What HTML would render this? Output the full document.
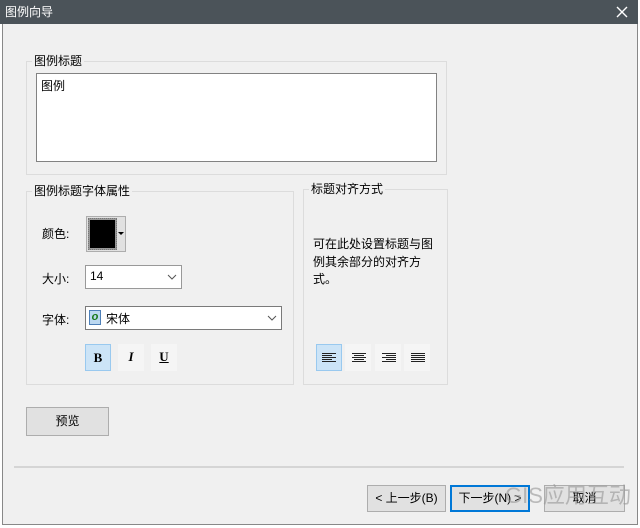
<!DOCTYPE html>
<html><head><meta charset="utf-8"><style>
*{box-sizing:border-box;margin:0;padding:0}
body{width:640px;height:528px;background:#fff;position:relative;overflow:hidden;font-family:"Liberation Sans","Noto Sans CJK SC",sans-serif;font-size:12px;color:#000}
.a{position:absolute}
.dlg{left:2px;top:0;width:636px;height:525px;background:#f0f0f0;border:1px solid #888;border-top:none}
.title{left:0;top:0;width:638px;height:24px;background:#4b5359;color:#fff;font-size:12px;line-height:24px;padding-left:5px}
.grp{border:1px solid #dcdcdc}
.lg{background:#f0f0f0;padding:0 2px;font-size:12px;line-height:14px;color:#000}
.btn{background:#e1e1e1;border:1px solid #adadad;text-align:center;line-height:26px;font-size:12px}
.tb{background:#f5f5f5;width:26px;height:27px}
.sel{background:#cce4f7;border:1px solid #99c9ef}
.combo{background:#fff;border:1px solid #7a7a7a}
</style></head><body>
<div class="a dlg"></div>
<div class="a title">图例向导</div>
<svg class="a" style="left:616px;top:6px" width="12" height="12"><path d="M1 1L11 11M11 1L1 11" stroke="#fff" stroke-width="1.4"/></svg>

<div class="a grp" style="left:26px;top:61px;width:421px;height:114px"></div>
<div class="a lg" style="left:32px;top:54px">图例标题</div>
<div class="a" style="left:36px;top:73px;width:401px;height:89px;background:#fff;border:1px solid #828282;padding:3px 4px">图例</div>

<div class="a grp" style="left:26px;top:191px;width:268px;height:194px"></div>
<div class="a lg" style="left:32px;top:184px">图例标题字体属性</div>
<div class="a" style="left:42px;top:225px">颜色:</div>
<div class="a" style="left:86px;top:216px;width:40px;height:36px;background:#e1e1e1;border:1px solid #adadad"></div>
<div class="a" style="left:88px;top:218px;width:29px;height:32px;border:1px dotted #777;background:#999"></div>
<div class="a" style="left:90px;top:220px;width:25px;height:28px;background:#000"></div>
<svg class="a" style="left:118px;top:232px" width="6" height="4"><path d="M0 0H6L3 3Z" fill="#000"/></svg>
<div class="a" style="left:42px;top:270px">大小:</div>
<div class="a combo" style="left:85px;top:265px;width:97px;height:24px;padding:3px 4px;border-color:#999">14</div>
<svg class="a" style="left:167px;top:274px" width="10" height="6"><path d="M1 1L5 5L9 1" stroke="#555" fill="none"/></svg>
<div class="a" style="left:42px;top:311px">字体:</div>
<div class="a combo" style="left:85px;top:306px;width:197px;height:24px;padding:3px 0 0 20px">宋体</div>
<div class="a" style="left:89px;top:310px;width:12px;height:15px;background:#bcd8f0;border:1px solid #4d7fb8;color:#1a7a1a;font-size:11px;font-style:italic;font-weight:bold;line-height:13px;text-align:center">o</div>
<svg class="a" style="left:267px;top:315px" width="10" height="6"><path d="M1 1L5 5L9 1" stroke="#555" fill="none"/></svg>
<div class="a tb sel" style="left:85px;top:344px;text-align:center;line-height:26px;font-family:'Liberation Serif',serif;font-weight:bold;font-size:13px">B</div>
<div class="a tb" style="left:118px;top:344px;text-align:center;line-height:26px;font-family:'Liberation Serif',serif;font-weight:bold;font-style:italic;font-size:13px">I</div>
<div class="a tb" style="left:151px;top:344px;text-align:center;line-height:26px;font-family:'Liberation Serif',serif;font-weight:bold;text-decoration:underline;font-size:13px">U</div>

<div class="a grp" style="left:303px;top:189px;width:145px;height:196px"></div>
<div class="a lg" style="left:309px;top:182px">标题对齐方式</div>
<div class="a" style="left:313px;top:236px;line-height:17.5px;width:125px">可在此处设置标题与图例其余部分的对齐方式。</div>
<div class="a tb sel" style="left:316px;top:344px"></div>
<div class="a tb" style="left:345px;top:344px"></div>
<div class="a tb" style="left:375px;top:344px"></div>
<div class="a tb" style="left:404px;top:344px"></div>
<svg class="a" style="left:316px;top:344px" width="120" height="27" stroke="#222" stroke-width="1">
<path d="M6 9.5H20M6 11.5H16M6 13.5H20M6 15.5H16M6 17.5H20"/>
<path d="M36 9.5H50M38 11.5H48M36 13.5H50M38 15.5H48M36 17.5H50"/>
<path d="M66 9.5H80M70 11.5H80M66 13.5H80M70 15.5H80M66 17.5H80"/>
<path d="M95 9.5H109M95 11.5H109M95 13.5H109M95 15.5H109M95 17.5H109"/>
</svg>

<div class="a btn" style="left:26px;top:407px;width:83px;height:29px;line-height:27px">预览</div>
<div class="a" style="left:14px;top:466px;width:610px;height:2px;background:#d5d5d5"></div>
<div class="a btn" style="left:367px;top:485px;width:79px;height:27px;line-height:25px">&lt; 上一步(B)</div>
<div class="a btn" style="left:450px;top:485px;width:80px;height:27px;line-height:23px;border:2px solid #0078d7">下一步(N) &gt;</div>
<div class="a btn" style="left:544px;top:485px;width:81px;height:27px;line-height:25px">取消</div>
<div class="a" style="left:505px;top:478px;font-size:22px;color:rgba(150,150,150,0.6)">GIS应用互动</div>
</body></html>
